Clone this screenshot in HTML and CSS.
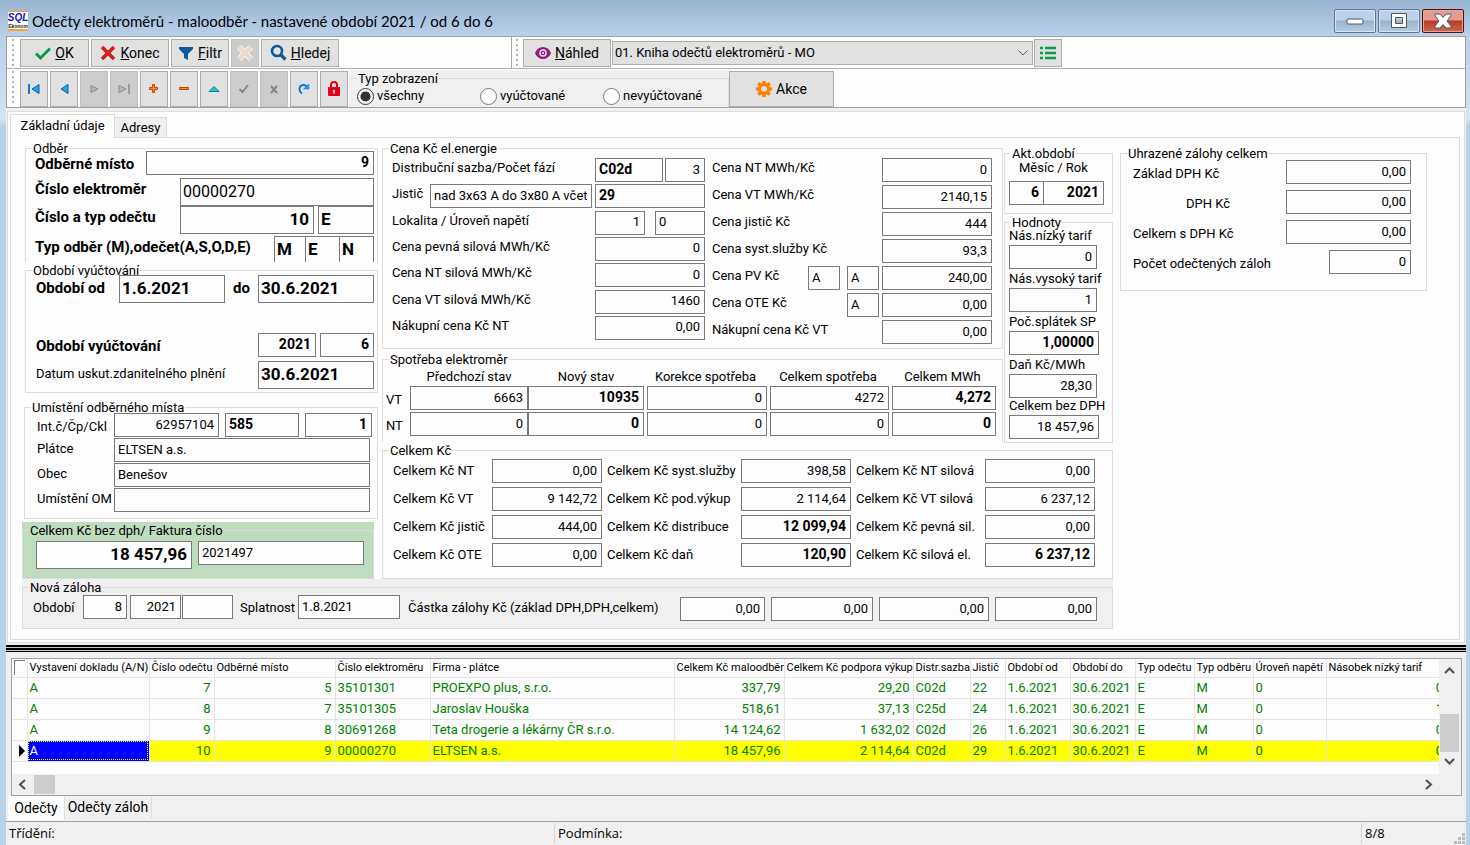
FILE: index.html
```html
<!DOCTYPE html>
<html lang="cs">
<head>
<meta charset="utf-8">
<title>Odečty elektroměrů - maloodběr</title>
<link rel="stylesheet" href="styles.css">
</head>
<body>
<header class="titlebar">
  <svg class="logo" viewBox="0 0 20 20" aria-hidden="true">
    <rect width="20" height="20" fill="#fff"/>
    <rect width="20" height="1" fill="#ff9a2e"/><rect y="18" width="20" height="2" fill="#ffa033"/>
    <text x="10" y="10" text-anchor="middle" class="logo-top">SQL</text>
    <text x="10" y="17" text-anchor="middle" class="logo-sub">Ekonom</text>
  </svg>
  <h1 class="title">Odečty elektroměrů - maloodběr - nastavené období 2021 / od 6 do 6</h1>
  <div class="winbtns">
    <button class="winbtn" aria-label="Minimalizovat"><svg width="18" height="16" viewBox="0 0 18 16"><rect x="1" y="6" width="16" height="5" rx="1" fill="#fff" stroke="#4a5568"/></svg></button>
    <button class="winbtn" aria-label="Maximalizovat"><svg width="18" height="16" viewBox="0 0 18 16"><path d="M1.500.5h15v14h-15zM5.500 4.500v6h7v-6z" fill="#fff" fill-rule="evenodd" stroke="#4a5568"/></svg></button>
    <button class="winbtn winbtn-close" aria-label="Zavřít"><svg width="18" height="16" viewBox="0 0 18 16"><path d="M1 1h5l3 3.500L12 1h5v2l-4 5 4 5v2h-5l-3-3.500L6 15H1v-2l4-5-4-5z" fill="#fff" stroke="#4a5568"/></svg></button>
  </div>
</header>

<main class="client">
  <div class="bars">
    <div class="bar">
      <div class="band band-left">
        <span class="grip"></span>
        <button class="btn w-ok"><svg width="16" height="16" viewBox="0 0 16 16"><path d="M1 8.500l4.500 4.500L15 3.500" fill="none" stroke="#0b9a4a" stroke-width="3"/></svg><span><u>O</u>K</span></button>
        <button class="btn w-konec"><svg width="16" height="16" viewBox="0 0 16 16"><path d="M2 2l12 12M14 2L2 14" stroke="#d3201f" stroke-width="3.600"/></svg><span><u>K</u>onec</span></button>
        <button class="btn w-filtr"><svg width="16" height="16" viewBox="0 0 16 16"><path d="M1 2h14v2l-5 5v6l-4-2V9L1 4z" fill="#0a5a9c"/></svg><span><u>F</u>iltr</span></button>
        <button class="btn w-icon off" disabled aria-label="Zrušit filtr"><svg width="18" height="18" viewBox="0 0 18 18"><path d="M3 3l12 12M15 3L3 15" stroke="#f4efe9" stroke-width="6"/><path d="M3 3l12 12M15 3L3 15" stroke="#e8d9cc" stroke-width="3.600"/></svg></button>
        <button class="btn w-konec"><svg width="17" height="17" viewBox="0 0 17 17"><circle cx="7" cy="7" r="5" fill="none" stroke="#0a5a9c" stroke-width="2.600"/><path d="M10.500 10.500l5 5" stroke="#0a5a9c" stroke-width="3.200"/></svg><span><u>H</u>ledej</span></button>
      </div>
      <div class="band band-right">
        <span class="grip"></span>
        <button class="btn w-nahled"><svg width="16" height="14" viewBox="0 0 16 14"><path d="M0 7c3-8 13-8 16 0-3 8-13 8-16 0z" fill="#951b81"/><circle cx="8" cy="7" r="3.800" fill="#e1e1e1"/><circle cx="8" cy="7" r="2.300" fill="#951b81"/><circle cx="8" cy="7" r="1" fill="#fff"/></svg><span><u>N</u>áhled</span></button>
        <select class="report" aria-label="Sestava"><option>01. Kniha odečtů elektroměrů - MO</option></select>
        <button class="btn w-icon" aria-label="Seznam"><svg width="16" height="14" viewBox="0 0 16 14"><path d="M0 2h3M5 2h11M0 7h3M5 7h11M0 12h3M5 12h11" stroke="#0b9a4a" stroke-width="2.400"/></svg></button>
      </div>
    </div>
    <div class="bar bar-nav">
      <span class="grip"></span>
      <div class="nav">
        <button class="btn nb" aria-label="První"><svg width="14" height="12" viewBox="0 0 14 12"><path d="M2 1v10" stroke="#1979c9" stroke-width="2"/><path d="M12 1.500v9L5 6z" fill="#22a3ea" stroke="#0b5cb8"/></svg></button>
        <button class="btn nb" aria-label="Předchozí"><svg width="14" height="12" viewBox="0 0 14 12"><path d="M11 1.500v9L4 6z" fill="#22a3ea" stroke="#0b5cb8"/></svg></button>
        <button class="btn nb off" disabled aria-label="Další"><svg width="14" height="12" viewBox="0 0 14 12"><path d="M4 2.500v7L11 6z" fill="#b8b8b8" stroke="#8a8a8a"/></svg></button>
        <button class="btn nb off" disabled aria-label="Poslední"><svg width="14" height="12" viewBox="0 0 14 12"><path d="M2 2.500v7L9 6z" fill="#b8b8b8" stroke="#8a8a8a"/><path d="M12 1v10" stroke="#8a8a8a" stroke-width="1.500"/></svg></button>
        <button class="btn nb" aria-label="Přidat"><svg width="12" height="12" viewBox="0 0 12 12"><path d="M4.500 1.500h2v3h3v2h-3v3h-2v-3h-3v-2h3z" fill="#ff8a14" stroke="#d23c10"/></svg></button>
        <button class="btn nb" aria-label="Smazat"><svg width="12" height="12" viewBox="0 0 12 12"><path d="M1.500 4.500h9v2h-9z" fill="#ff8a14" stroke="#d23c10"/></svg></button>
        <button class="btn nb" aria-label="Upravit"><svg width="12" height="12" viewBox="0 0 12 12"><path d="M1 8.500L6 3.500l5 5z" fill="#2ec0d8" stroke="#0e7d96"/></svg></button>
        <button class="btn nb off" disabled aria-label="Uložit"><svg width="12" height="12" viewBox="0 0 12 12"><path d="M1.500 6l3 3L10 2" fill="none" stroke="#858585" stroke-width="2"/></svg></button>
        <button class="btn nb off" disabled aria-label="Zrušit"><svg width="12" height="12" viewBox="0 0 12 12"><path d="M3 3l6 7M9 3l-6 7" stroke="#858585" stroke-width="2"/></svg></button>
        <button class="btn nb" aria-label="Obnovit"><svg width="12" height="12" viewBox="0 0 12 12"><path d="M4 10.500C0 8 1 2 5.500 2 7.500 2 8.500 3 9 4.500" fill="none" stroke="#1477c9" stroke-width="2"/><path d="M5.500 6H11V1z" fill="#2ca0e8" stroke="#1477c9" stroke-width=".5"/></svg></button>
        <button class="btn nb" aria-label="Zámek"><svg width="14" height="16" viewBox="0 0 14 16"><path d="M4 8V4a3 3 0 016 0v4" fill="none" stroke="#e2001a" stroke-width="2"/><rect x="1" y="6" width="12" height="9" rx="1" fill="#e2001a"/><path d="M7 9v3.500" stroke="#fff" stroke-width="1.500"/></svg></button>
      </div>
      <div class="viewbox">
        <fieldset class="group view">
          <legend>Typ zobrazení</legend>
          <label class="opt"><input type="radio" name="view" checked>všechny</label>
          <label class="opt"><input type="radio" name="view">vyúčtované</label>
          <label class="opt"><input type="radio" name="view">nevyúčtované</label>
        </fieldset>
      </div>
      <button class="btn w-akce"><svg width="16" height="16" viewBox="0 0 16 16"><circle cx="8" cy="8" r="4.500" fill="none" stroke="#ff7e00" stroke-width="3"/><path d="M8 0v3M8 13v3M0 8h3M13 8h3M2.300 2.300l2.200 2.200M11.500 11.500l2.200 2.200M2.300 13.700l2.200-2.200M11.500 4.500l2.200-2.200" stroke="#ff7e00" stroke-width="3.400"/></svg><span>Akce</span></button>
    </div>
  </div>

  <section class="upper">
    <nav class="tabs" role="tablist">
      <button class="tab tab-on" role="tab" aria-selected="true">Základní údaje</button>
      <button class="tab" role="tab" aria-selected="false">Adresy</button>
    </nav>
    <form class="page">
      <div class="block">
        <div class="cols">
          <div class="col-a">
            <fieldset class="group g-odber">
              <legend>Odběr</legend>
              <div class="row low"><label class="strong" for="om">Odběrné místo</label><input id="om" class="in w-228 r b" value="9"></div>
              <div class="row"><label class="strong" for="ce">Číslo elektroměr</label><input id="ce" class="in tall w-194" value="00000270"></div>
              <div class="row"><label class="strong" for="co">Číslo a typ odečtu</label><input id="co" class="in tall w-134 r b" value="10"><input class="in tall w-56 b gap-l" aria-label="Typ odečtu" value="E"></div>
              <div class="row cut"><label class="strong" for="to">Typ odběr (M),odečet(A,S,O,D,E)</label><input id="to" class="in tall w-32 b" value="M"><input class="in tall w-34 b" aria-label="Odečet" value="E"><input class="in tall w-34 b" aria-label="Příznak" value="N"></div>
            </fieldset>
            <fieldset class="group g-obdobi">
              <legend>Období vyúčtování</legend>
              <div class="row"><label class="strong" for="od">Období od</label><input id="od" class="in tall w-106 b" value="1.6.2021"><label class="strong mid" for="do">do</label><input id="do" class="in tall w-116 b" value="30.6.2021"></div>
              <div class="row"><label class="strong" for="ov">Období vyúčtování</label><input id="ov" class="in w-58 r b" value="2021"><input class="in w-54 r b gap-l" aria-label="Měsíc vyúčtování" value="6"></div>
              <div class="row"><label for="du">Datum uskut.zdanitelného plnění</label><input id="du" class="in tall w-116 b" value="30.6.2021"></div>
            </fieldset>
            <fieldset class="group g-umisteni">
              <legend>Umístění odběrného místa</legend>
              <div class="row low first"><label for="ic">Int.č/Čp/Ckl</label><input id="ic" class="in w-105 r" value="62957104"><input class="in w-74 b" aria-label="Čp" value="585"><input class="in w-67 r b" aria-label="Ckl" value="1"></div>
              <div class="row"><label for="pl">Plátce</label><input id="pl" class="in grow" value="ELTSEN a.s."></div>
              <div class="row"><label for="ob">Obec</label><input id="ob" class="in grow" value="Benešov"></div>
              <div class="row"><label for="um">Umístění OM</label><input id="um" class="in grow" value=""></div>
            </fieldset>
            <div class="green">
              <fieldset class="group g-green">
                <legend>Celkem Kč bez dph/ Faktura číslo</legend>
                <input class="in tall w-156 r b" aria-label="Celkem Kč bez dph" value="18 457,96">
                <input class="in w-166" aria-label="Faktura číslo" value="2021497">
              </fieldset>
            </div>
          </div>

          <div class="col-right">
            <div class="cols-top">
              <div class="col-b">
                <fieldset class="group g-cena">
                  <legend>Cena Kč el.energie</legend>
                  <div class="stack cena-l">
                    <div class="row"><label for="ds">Distribuční sazba/Počet fází</label><input id="ds" class="in w-68 b" value="C02d"><input class="in w-40 r gap-2" aria-label="Počet fází" value="3"></div>
                    <div class="row"><label for="ji">Jistič</label><input id="ji" class="in w-162" value="nad 3x63 A do 3x80 A včetně"><input class="in w-110 b gap-s" aria-label="Jistič kód" value="29"></div>
                    <div class="row"><label for="lo">Lokalita / Úroveň napětí</label><input id="lo" class="in w-50 r" value="1"><input class="in w-50 gap-xl" aria-label="Úroveň napětí" value="0"></div>
                    <div class="row"><label for="cp">Cena pevná silová MWh/Kč</label><input id="cp" class="in w-110 r" value="0"></div>
                    <div class="row"><label for="cn">Cena NT silová MWh/Kč</label><input id="cn" class="in w-110 r" value="0"></div>
                    <div class="row"><label for="cv">Cena VT silová MWh/Kč</label><input id="cv" class="in w-110 r" value="1460"></div>
                    <div class="row"><label for="nn">Nákupní cena Kč NT</label><input id="nn" class="in w-110 r" value="0,00"></div>
                  </div>
                  <div class="stack cena-r">
                    <div class="row"><label for="r1">Cena NT MWh/Kč</label><input id="r1" class="in w-110 r" value="0"></div>
                    <div class="row"><label for="r2">Cena VT MWh/Kč</label><input id="r2" class="in w-110 r" value="2140,15"></div>
                    <div class="row"><label for="r3">Cena jistič Kč</label><input id="r3" class="in w-110 r" value="444"></div>
                    <div class="row"><label for="r4">Cena syst.služby Kč</label><input id="r4" class="in w-110 r" value="93,3"></div>
                    <div class="row"><label for="r5">Cena PV Kč</label><input class="in w-32" aria-label="PV příznak 1" value="A"><input class="in w-32 gap-m" aria-label="PV příznak 2" value="A"><input id="r5" class="in w-110 r gap-s" value="240,00"></div>
                    <div class="row"><label for="r6">Cena OTE Kč</label><input class="in w-32" aria-label="OTE příznak" value="A"><input id="r6" class="in w-110 r gap-s" value="0,00"></div>
                    <div class="row"><label for="r7">Nákupní cena Kč VT</label><input id="r7" class="in w-110 r" value="0,00"></div>
                  </div>
                </fieldset>
                <fieldset class="group g-spot">
                  <legend>Spotřeba elektroměr</legend>
                  <div class="meter">
                    <span></span><span>Předchozí stav</span><span>Nový stav</span><span>Korekce spotřeba</span><span>Celkem spotřeba</span><span>Celkem MWh</span>
                    <label for="v1">VT</label><input id="v1" class="in r" value="6663"><input class="in r b" aria-label="VT nový stav" value="10935"><input class="in r gap-s" aria-label="VT korekce" value="0"><input class="in r gap-s" aria-label="VT celkem" value="4272"><input class="in r b gap-s" aria-label="VT MWh" value="4,272">
                    <label for="n1">NT</label><input id="n1" class="in r" value="0"><input class="in r b" aria-label="NT nový stav" value="0"><input class="in r gap-s" aria-label="NT korekce" value="0"><input class="in r gap-s" aria-label="NT celkem" value="0"><input class="in r b gap-s" aria-label="NT MWh" value="0">
                  </div>
                </fieldset>
              </div>
              <div class="col-c">
                <fieldset class="group g-akt">
                  <legend>Akt.období</legend>
                  <label class="center" for="am">Měsíc / Rok</label>
                  <div class="row"><input id="am" class="in w-35 r b" value="6"><input class="in w-60 r b" aria-label="Rok" value="2021"></div>
                </fieldset>
                <fieldset class="group g-hod">
                  <legend>Hodnoty</legend>
                  <label for="h1">Nás.nízký tarif</label><input id="h1" class="in w-88 r" value="0">
                  <label for="h2">Nás.vysoký tarif</label><input id="h2" class="in w-88 r" value="1">
                  <label for="h3">Poč.splátek SP</label><input id="h3" class="in w-90 r b" value="1,00000">
                  <label for="h4">Daň Kč/MWh</label><input id="h4" class="in w-88 r" value="28,30">
                  <label for="h5">Celkem bez DPH</label><input id="h5" class="in w-90 r" value="18 457,96">
                </fieldset>
              </div>
            </div>
            <fieldset class="group g-celkem">
              <legend>Celkem Kč</legend>
              <div class="stack">
                <div class="row"><label for="k1">Celkem Kč NT</label><input id="k1" class="in w-110 r" value="0,00"></div>
                <div class="row"><label for="k2">Celkem Kč VT</label><input id="k2" class="in w-110 r" value="9 142,72"></div>
                <div class="row"><label for="k3">Celkem Kč jistič</label><input id="k3" class="in w-110 r" value="444,00"></div>
                <div class="row"><label for="k4">Celkem Kč OTE</label><input id="k4" class="in w-110 r" value="0,00"></div>
              </div>
              <div class="stack">
                <div class="row"><label for="k5">Celkem Kč syst.služby</label><input id="k5" class="in w-110 r" value="398,58"></div>
                <div class="row"><label for="k6">Celkem Kč pod.výkup</label><input id="k6" class="in w-110 r" value="2 114,64"></div>
                <div class="row"><label for="k7">Celkem Kč distribuce</label><input id="k7" class="in w-110 r b" value="12 099,94"></div>
                <div class="row"><label for="k8">Celkem Kč daň</label><input id="k8" class="in w-110 r b" value="120,90"></div>
              </div>
              <div class="stack">
                <div class="row"><label for="k9">Celkem Kč NT silová</label><input id="k9" class="in w-110 r" value="0,00"></div>
                <div class="row"><label for="k10">Celkem Kč VT silová</label><input id="k10" class="in w-110 r" value="6 237,12"></div>
                <div class="row"><label for="k11">Celkem Kč pevná sil.</label><input id="k11" class="in w-110 r" value="0,00"></div>
                <div class="row"><label for="k12">Celkem Kč silová el.</label><input id="k12" class="in w-110 r b" value="6 237,12"></div>
              </div>
            </fieldset>
          </div>
        </div>
        <div class="gray">
          <fieldset class="group g-nova">
            <legend>Nová záloha</legend>
            <label class="lab-obd" for="z1">Období</label>
            <input id="z1" class="in w-44 r" value="8">
            <input class="in w-51 r gap-s" aria-label="Rok zálohy" value="2021">
            <input class="in w-51 gap-1" aria-label="Pořadí zálohy" value="">
            <label class="lab-spl" for="z2">Splatnost</label>
            <input id="z2" class="in w-102" value="1.8.2021">
            <label class="lab-cast" for="z3">Částka zálohy Kč (základ DPH,DPH,celkem)</label>
            <div class="sums">
              <input id="z3" class="in w-85 r" value="0,00">
              <input class="in w-102 r" aria-label="DPH" value="0,00">
              <input class="in w-110 r" aria-label="Celkem" value="0,00">
              <input class="in w-102 r" aria-label="Celkem k úhradě" value="0,00">
            </div>
          </fieldset>
        </div>
      </div>
      <fieldset class="group g-uhr">
        <legend>Uhrazené zálohy celkem</legend>
        <div class="row"><label for="u1">Základ DPH Kč</label><input id="u1" class="in w-125 r" value="0,00"></div>
        <div class="row"><label class="indent" for="u2">DPH Kč</label><input id="u2" class="in w-125 r" value="0,00"></div>
        <div class="row"><label for="u3">Celkem s DPH Kč</label><input id="u3" class="in w-125 r" value="0,00"></div>
        <div class="row"><label for="u4">Počet odečtených záloh</label><input id="u4" class="in w-82 r" value="0"></div>
      </fieldset>
    </form>
  </section>

  <div class="splitter"></div>

  <section class="lower">
    <div class="gridbox">
      <div class="gridtop">
        <div class="gridview">
          <table class="grid">
            <colgroup><col class="c0"><col class="c1"><col class="c2"><col class="c3"><col class="c4"><col class="c5"><col class="c6"><col class="c7"><col class="c8"><col class="c9"><col class="c10"><col class="c10"><col class="c12"><col class="c12"><col class="c14"><col></colgroup>
            <thead><tr><th><span class="corner"></span></th><th>Vystavení dokladu (A/N)</th><th>Číslo odečtu</th><th>Odběrné místo</th><th>Číslo elektroměru</th><th>Firma - plátce</th><th>Celkem Kč maloodběr</th><th>Celkem Kč podpora výkup</th><th>Distr.sazba</th><th>Jistič</th><th>Období od</th><th>Období do</th><th>Typ odečtu</th><th>Typ odběru</th><th>Úroveň napětí</th><th>Násobek nízký tarif</th></tr></thead>
            <tbody>
              <tr><td></td><td>A</td><td class="r">7</td><td class="r">5</td><td>35101301</td><td>PROEXPO plus, s.r.o.</td><td class="r">337,79</td><td class="r">29,20</td><td>C02d</td><td>22</td><td>1.6.2021</td><td>30.6.2021</td><td>E</td><td>M</td><td>0</td><td class="r">0</td></tr>
              <tr><td></td><td>A</td><td class="r">8</td><td class="r">7</td><td>35101305</td><td>Jaroslav Houška</td><td class="r">518,61</td><td class="r">37,13</td><td>C25d</td><td>24</td><td>1.6.2021</td><td>30.6.2021</td><td>E</td><td>M</td><td>0</td><td class="r">1</td></tr>
              <tr><td></td><td>A</td><td class="r">9</td><td class="r">8</td><td>30691268</td><td>Teta drogerie a lékárny ČR s.r.o.</td><td class="r">14 124,62</td><td class="r">1 632,02</td><td>C02d</td><td>26</td><td>1.6.2021</td><td>30.6.2021</td><td>E</td><td>M</td><td>0</td><td class="r">0</td></tr>
              <tr class="sel"><td><svg width="6" height="12" viewBox="0 0 6 12"><path d="M0 0l6 6-6 6z"/></svg></td><td class="cur">A</td><td class="r">10</td><td class="r">9</td><td>00000270</td><td>ELTSEN a.s.</td><td class="r">18 457,96</td><td class="r">2 114,64</td><td>C02d</td><td>29</td><td>1.6.2021</td><td>30.6.2021</td><td>E</td><td>M</td><td>0</td><td class="r">0</td></tr>
            </tbody>
          </table>
        </div>
        <div class="vscroll">
          <svg width="19" height="18" viewBox="0 0 19 18"><path d="M5 13l4.500-4.500L14 13" fill="none" stroke="#505050" stroke-width="2"/></svg>
          <span class="vthumb"></span>
          <svg width="19" height="18" viewBox="0 0 19 18"><path d="M5 7l4.500 4.500L14 7" fill="none" stroke="#505050" stroke-width="2"/></svg>
        </div>
      </div>
      <div class="hscroll">
        <svg width="21" height="19" viewBox="0 0 21 19"><path d="M13 5L8 9.500l5 4.500" fill="none" stroke="#505050" stroke-width="2"/></svg>
        <span class="hthumb"></span>
        <svg width="21" height="19" viewBox="0 0 21 19"><path d="M8 5l5 4.500L8 14" fill="none" stroke="#505050" stroke-width="2"/></svg>
      </div>
    </div>
    <nav class="tabs-b" role="tablist">
      <button class="tab-b tab-b-on" role="tab" aria-selected="true">Odečty</button>
      <button class="tab-b" role="tab" aria-selected="false">Odečty záloh</button>
    </nav>
  </section>

  <footer class="status">
    <span class="st st-a">Třídění:</span><span class="st st-b">Podmínka:</span><span class="st st-c">8/8</span>
    <svg class="sizer" width="12" height="12" viewBox="0 0 12 12"><path d="M8 0h3v3H8zM4 4h3v3H4zM8 4h3v3H8zM0 8h3v3H0zM4 8h3v3H4zM8 8h3v3H8z" fill="#bdbdbd"/></svg>
  </footer>
</main>
</body>
</html>
```
FILE: styles.css
```css
* { box-sizing: border-box; }

body {
  margin: 0;
  min-height: 100vh;
  display: flex;
  flex-direction: column;
  padding: 0 4px 0 6px;
  background: linear-gradient(#99b4d1 0, #b9d1ea 36px, #d5e3f2 120px, #b9d1ea 126px);
  font-family: Roboto, "Liberation Sans", sans-serif;
  font-size: 13px;
  color: #000;
}

button, input, select { font: inherit; color: inherit; margin: 0; }

/* group boxes */
.group { --side: 0px; min-width: 0; margin: 0; padding: 0 0 0 var(--side); border: 1px solid #dcdcdc; }
.group > legend { height: 1px; line-height: 1px; margin-left: calc(6px - var(--side)); padding: 0 1px; white-space: nowrap; }

/* title bar */
.titlebar { display: flex; align-items: center; height: 36px; padding: 5px 0 0 2px; }
.logo { width: 20px; height: 20px; }
.logo-top { font: bold italic 10px "Liberation Sans", sans-serif; fill: #1414b4; }
.logo-sub { font: bold 5px "Liberation Sans", sans-serif; fill: #222; }
.title { flex: 1; margin: 0 0 0 4px; font: 400 15px Lato, "Open Sans", sans-serif; white-space: nowrap; }
.winbtns { display: flex; gap: 2px; padding-right: 2px; }
.winbtn {
  width: 42px; height: 24px; padding: 0;
  display: flex; align-items: center; justify-content: center;
  border: 1px solid #5f7694; border-radius: 2px;
  box-shadow: inset 0 0 0 1px #d5e4f4;
  background: linear-gradient(#bdd1e8 45%, #9ab2ce 50%, #b4cbe4);
}
.winbtn-close { border-color: #4b1512; box-shadow: inset 0 0 0 1px #e9a499; background: linear-gradient(#e39d90 45%, #b83a24 50%, #cf6a52); }

.client { flex: 1; display: flex; flex-direction: column; border-top: 1px solid #a0a0a0; background: #f0f0f0; }

/* toolbars */
.bars { border: 1px solid #a0a0a0; border-top: 0; background: #fdfdfd; }
.bar { display: flex; height: 32px; border-bottom: 1px solid #b0b0b0; }
.band { display: flex; align-items: center; gap: 2px; padding-left: 5px; }
.band-left { width: 505px; border-right: 1px solid #a8a8a8; }
.band-right { flex: 1; padding-left: 4px; gap: 1px; }
.grip { width: 2px; align-self: stretch; margin: 2px 4px 2px 0; background: repeating-linear-gradient(#b4b4b4 0 2px, transparent 2px 5px); }
.btn {
  display: flex; align-items: center; justify-content: center; gap: 4px;
  height: 28px; padding: 0; border: 1px solid #adadad; background: #e1e1e1;
  font-size: 14px;
}
.off { background: #ccc; border-color: #bfbfbf; }
.w-ok { width: 69px; }
.w-konec { width: 78px; }
.w-filtr { width: 58px; }
.w-icon { width: 28px; }
.w-nahled { width: 88px; }
.w-akce { width: 105px; height: 36px; }
.report {
  width: 421px; height: 24px; padding: 0 20px 0 2px;
  appearance: none; border: 1px solid #adadad; border-radius: 0;
  background: #e1e1e1 url("data:image/svg+xml,%3Csvg xmlns='http://www.w3.org/2000/svg' width='10' height='6'%3E%3Cpath d='M.5.500l4.500 4.500 4.500-4.500' fill='none' stroke='%23606060'/%3E%3C/svg%3E") no-repeat right 4px center;
}
.bar-nav { height: 38px; border-bottom: 0; align-items: flex-end; padding-left: 5px; }
.nav { display: flex; gap: 2px; margin-left: 2px; }
.nb { width: 28px; height: 36px; }
.viewbox { width: 380px; height: 37px; margin-left: 1px; padding-top: 8px; background: #f0f0f0; }
.view { --side: 8px; display: flex; height: 29px; border-bottom: 0; border-left: 0; padding-top: 7px; }
.view > legend { margin-left: 0; }
.opt { display: flex; align-items: center; width: 123px; height: 20px; gap: 3px; }
.opt input { width: 17px; height: 17px; accent-color: #333; }

/* upper page control */
.upper { margin: 3px 1px 2px 1px; padding: 3px 3px 2px 2px; border: 1px solid #dcdcdc; background: #fdfdfd; }
.tabs { display: flex; align-items: flex-end; height: 22px; }
.tab { height: 20px; width: 52px; padding: 0; border: 1px solid #dcdcdc; border-left: 0; border-bottom: 0; background: #f0f0f0; }
.tab-on { width: 105px; height: 24px; margin-bottom: -1px; padding-bottom: 3px; border-left: 1px solid #dcdcdc; background: #fdfdfd; position: relative; }
.page { display: flex; gap: 7px; padding: 10px 0 10px 11px; margin-right: 1px; border: 1px solid #dcdcdc; }
.block { width: 1091px; }
.cols { display: flex; gap: 4px; }
.cols-top { display: flex; gap: 1px; }
.col-a { width: 356px; }
.col-right { flex: 1; }
.col-b { width: 621px; }
.col-c { flex: 1; padding-top: 5px; }

label { line-height: 20px; white-space: nowrap; }
.strong { font-weight: 700; font-size: 15px; line-height: 22px; }
.row { display: flex; }
.row > label { flex: 1; }
.low { align-items: flex-end; }

.in { height: 24px; min-width: 0; padding: 0 4px 2px 3px; border: 1px solid #7a7a7a; border-radius: 0; background: #fdfdfd; }
.r { text-align: right; }
.b { font-weight: 700; font-size: 14px; }
.tall { height: 28px; padding-left: 2px; font-size: 16px; }
.tall.b { font-size: 17px; }
.grow { flex: 1; }
.gap-1 { margin-left: 1px; }
.gap-2 { margin-left: 2px; }
.gap-s { margin-left: 3px; }
.gap-l { margin-left: 4px; }
.gap-m { margin-left: 7px; }
.gap-xl { margin-left: 10px; }
.w-32 { width: 32px; } .w-34 { width: 34px; } .w-35 { width: 35px; } .w-40 { width: 40px; }
.w-44 { width: 44px; } .w-50 { width: 50px; } .w-51 { width: 51px; } .w-54 { width: 54px; }
.w-56 { width: 56px; } .w-58 { width: 58px; } .w-60 { width: 60px; } .w-67 { width: 67px; }
.w-68 { width: 68px; } .w-74 { width: 74px; } .w-82 { width: 82px; } .w-85 { width: 85px; }
.w-88 { width: 88px; } .w-90 { width: 90px; } .w-102 { width: 102px; } .w-105 { width: 105px; }
.w-106 { width: 106px; } .w-110 { width: 110px; } .w-116 { width: 116px; } .w-125 { width: 125px; }
.w-134 { width: 134px; } .w-156 { width: 156px; } .w-162 { width: 162px; } .w-166 { width: 166px; }
.w-194 { width: 194px; } .w-228 { width: 228px; }

.g-odber { --side: 9px; height: 114px; margin-left: 3px; padding-top: 2px; padding-right: 3px; border-bottom: 0; }
.g-odber .row + .row { margin-top: 3px; }
.g-odber .row + .row + .row { margin-top: 0; }
.g-odber .row + .cut.cut { margin-top: 2px; }
.g-odber .cut .in { height: 26px; border-bottom: 0; }
.g-odber .cut .in + .in { border-left: 0; }
.g-obdobi { --side: 10px; display: flex; flex-direction: column; height: 123px; margin-top: 8px; margin-left: 3px; padding-top: 4px; padding-right: 3px; }
.g-obdobi .row:last-child { margin-top: 2px; }
.g-obdobi .row:nth-child(3) { margin-top: 30px; }
.g-obdobi .row > label { line-height: 26px; }
.row > .mid { flex: 0 0 33px; padding-left: 8px; }
.g-umisteni { --side: 12px; height: 112px; margin-top: 14px; margin-left: 2px; padding-top: 5px; padding-right: 7px; }
.g-umisteni .row > label { flex: 0 0 77px; line-height: 22px; }
.g-umisteni .row { margin-bottom: 1px; }
.g-umisteni .first { gap: 6px; margin-right: -3px; }
.g-umisteni .first > label { margin-right: -6px; line-height: 20px; }
.green { width: 352px; margin-top: 3px; padding-top: 8px; background: #c0dcc0; }
.g-green { --side: 13px; display: flex; gap: 6px; height: 49px; padding-top: 10px; }

.stack { display: flex; flex-direction: column; justify-content: space-between; }
.g-cena { --side: 9px; display: flex; height: 201px; padding-top: 9px; gap: 7px; }
.g-cena .stack { flex: 0 0 auto; }
.cena-l { width: 313px; height: 182px; }
.cena-r { width: 280px; height: 186px; }
.g-spot { --side: 3px; height: 83px; margin-top: 10px; border-bottom: 0; }
.meter { display: grid; grid-template-columns: 24px 118px 116px 123px 122px 107px; grid-template-rows: 26px 26px 24px; }
.meter > span { text-align: center; line-height: 34px; }
.meter > label { line-height: 28px; }
.g-akt { --side: 4px; height: 61px; padding-top: 4px; }
.center { display: block; padding-left: 10px; }
.g-akt .row { margin-top: 3px; }
.g-akt .in + .in { border-left: 0; }
.g-hod { --side: 4px; display: grid; grid-template-rows: repeat(3, 18px 25px) 18px 23px 18px 25px; height: 221px; margin-top: 8px; padding-top: 4px; align-items: start; }
.g-hod > label { line-height: 18px; }
.g-celkem { --side: 10px; display: flex; gap: 5px; height: 129px; margin-top: 7px; padding-top: 8px; }
.g-celkem .stack { height: 108px; width: 244px; }
.g-celkem .stack:first-of-type { width: 209px; }
.g-celkem .stack:last-of-type { width: 239px; }
.g-celkem .row > label { line-height: 24px; }
.gray { padding-top: 8px; background: #f0f0f0; }
.g-nova { --side: 10px; display: flex; height: 42px; padding-top: 7px; }
.g-nova > label { line-height: 26px; }
.lab-obd { width: 50px; }
.lab-spl { width: 65px; padding-left: 7px; }
.lab-cast { width: 280px; padding-left: 8px; }
.sums { display: flex; gap: 6px; padding-top: 2px; }
.g-uhr { --side: 12px; width: 307px; height: 138px; margin-top: 5px; padding-top: 6px; padding-right: 15px; }
.g-uhr .row { height: 30px; }
.g-uhr .row > label { line-height: 28px; }
.g-uhr .indent { padding-left: 53px; }

/* splitter */
.splitter { height: 7px; background: linear-gradient(#000 0 2px, #c8c8c8 2px 3px, #000 3px 5px, #c8c8c8 5px 6px, #000 6px); }

/* data grid */
.lower { flex: 1; display: flex; flex-direction: column; padding: 6px 4px 0 5px; border-bottom: 1px solid #a0a0a0; }
.gridbox { border: 1px solid #a0a0a8; background: #fdfdfd; }
.gridtop { display: flex; height: 115px; }
.gridview { flex: 1; min-width: 0; overflow: hidden; }
.grid { width: calc(100% + 8px); table-layout: fixed; border-collapse: collapse; }
.grid th, .grid td { padding: 0 2px; border: 1px solid #e4e4e4; border-width: 0 1px 1px 0; white-space: nowrap; overflow: hidden; text-align: left; }
.grid th { height: 18px; padding: 0 0 0 2px; font-size: 11px; font-weight: 400; }
.grid td { height: 21px; color: #008000; }
.grid td.r { text-align: right; padding-right: 3px; }
.grid .sel td { background: #ff0; }
.grid .sel td:first-child { background: #fdfdfd; padding-left: 7px; }
.grid .sel svg { display: block; }
.grid .sel .cur { background: #00f; color: #fff; outline: 1px dotted #ff0; outline-offset: -2px; }
.corner { display: block; width: 11px; height: 15px; border: 1px solid #777; border-width: 1px 0 0 1px; }
.c0 { width: 15px; } .c1 { width: 122px; } .c2 { width: 65px; } .c3 { width: 121px; }
.c4 { width: 95px; } .c5 { width: 244px; } .c6 { width: 110px; } .c7 { width: 129px; }
.c8 { width: 57px; } .c9 { width: 35px; } .c10 { width: 65px; } .c12 { width: 59px; } .c14 { width: 73px; }
.vscroll { display: flex; flex-direction: column; align-items: center; width: 22px; padding: 1px 2px 0 0; background: #f0f0f0; }
.vthumb { width: 19px; height: 38px; margin-top: 36px; background: #cdcdcd; }
.hscroll { display: flex; align-items: center; height: 21px; padding-right: 22px; background: #f0f0f0; }
.hthumb { width: 21px; height: 19px; margin-left: 1px; margin-right: auto; background: #cdcdcd; }
.tabs-b { display: flex; align-items: flex-start; margin-left: -3px; }
.tab-b { width: 87px; height: 22px; padding: 0; border: 1px solid #dcdcdc; border-width: 0 1px 0 0; background: #f0f0f0; font-size: 14px; }
.tab-b-on { width: 57px; height: 24px; background: #fdfdfd; }

/* status bar */
.status { display: flex; align-items: center; height: 23px; font: 13px "Open Sans", "Noto Sans", sans-serif; }
.st { padding-left: 3px; line-height: 21px; }
.st-a { width: 549px; border-right: 1px solid #d4d4d4; }
.st-b { flex: 1; border-right: 1px solid #d4d4d4; }
.st-c { width: 92px; }
.sizer { align-self: flex-end; }
```
